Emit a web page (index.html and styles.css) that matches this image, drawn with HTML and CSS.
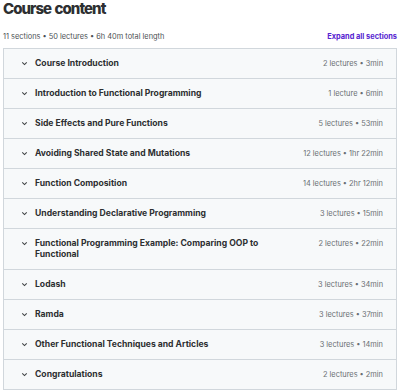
FILE: index.html
```
<!DOCTYPE html>
<html>
<head>
<meta charset="utf-8">
<link rel="stylesheet" href="styles.css">
</head>
<body>
<div class="page">
  <h2 class="title">Course content</h2>
  <div class="summary">
    <span>11 sections • 50 lectures • 6h 40m total length</span>
    <span class="expand">Expand all sections</span>
  </div>
  <div class="sections">
    <div class="row"><span class="chev"><svg viewBox="0 0 10 10"><path d="M2.5 3.8 L5 6.2 L7.5 3.8"/></svg></span><span class="name">Course Introduction</span><span class="meta">2 lectures • 3min</span></div>
    <div class="row"><span class="chev"><svg viewBox="0 0 10 10"><path d="M2.5 3.8 L5 6.2 L7.5 3.8"/></svg></span><span class="name">Introduction to Functional Programming</span><span class="meta">1 lecture • 6min</span></div>
    <div class="row"><span class="chev"><svg viewBox="0 0 10 10"><path d="M2.5 3.8 L5 6.2 L7.5 3.8"/></svg></span><span class="name">Side Effects and Pure Functions</span><span class="meta">5 lectures • 53min</span></div>
    <div class="row"><span class="chev"><svg viewBox="0 0 10 10"><path d="M2.5 3.8 L5 6.2 L7.5 3.8"/></svg></span><span class="name">Avoiding Shared State and Mutations</span><span class="meta">12 lectures • 1hr 22min</span></div>
    <div class="row"><span class="chev"><svg viewBox="0 0 10 10"><path d="M2.5 3.8 L5 6.2 L7.5 3.8"/></svg></span><span class="name">Function Composition</span><span class="meta">14 lectures • 2hr 12min</span></div>
    <div class="row"><span class="chev"><svg viewBox="0 0 10 10"><path d="M2.5 3.8 L5 6.2 L7.5 3.8"/></svg></span><span class="name">Understanding Declarative Programming</span><span class="meta">3 lectures • 15min</span></div>
    <div class="row"><span class="chev"><svg viewBox="0 0 10 10"><path d="M2.5 3.8 L5 6.2 L7.5 3.8"/></svg></span><span class="name wrap">Functional Programming Example: Comparing OOP to Functional</span><span class="meta">2 lectures • 22min</span></div>
    <div class="row"><span class="chev"><svg viewBox="0 0 10 10"><path d="M2.5 3.8 L5 6.2 L7.5 3.8"/></svg></span><span class="name">Lodash</span><span class="meta">3 lectures • 34min</span></div>
    <div class="row"><span class="chev"><svg viewBox="0 0 10 10"><path d="M2.5 3.8 L5 6.2 L7.5 3.8"/></svg></span><span class="name">Ramda</span><span class="meta">3 lectures • 37min</span></div>
    <div class="row"><span class="chev"><svg viewBox="0 0 10 10"><path d="M2.5 3.8 L5 6.2 L7.5 3.8"/></svg></span><span class="name">Other Functional Techniques and Articles</span><span class="meta">3 lectures • 14min</span></div>
    <div class="row"><span class="chev"><svg viewBox="0 0 10 10"><path d="M2.5 3.8 L5 6.2 L7.5 3.8"/></svg></span><span class="name">Congratulations</span><span class="meta">2 lectures • 2min</span></div>
  </div>
</div>
</body>
</html>
```
FILE: styles.css
```
html, body {
  margin: 0;
  padding: 0;
  background: #ffffff;
}
body {
  font-family: Inter, "Noto Sans", sans-serif;
  color: #2d2f31;
}
.page {
  padding: 1px 3px 0;
  width: 394px;
}
.title {
  margin: 0;
  font-size: 15px;
  font-weight: 800;
  line-height: 16px;
  letter-spacing: -0.95px;
  word-spacing: 1px;
  color: #2d2f31;
}
.summary {
  display: flex;
  justify-content: space-between;
  align-items: center;
  font-size: 7.4px;
  color: #4d5155;
  margin-top: 13px;
  height: 12px;
}
.expand {
  color: #5624d0;
  font-weight: 700;
}
.sections {
  margin-top: 6px;
  border: 1px solid #d1d7dc;
  border-bottom: none;
}
.row {
  display: flex;
  align-items: flex-start;
  background: #f7f9fa;
  border-bottom: 1px solid #d1d7dc;
  padding: 9px 13px 9px 16px;
}
.chev {
  width: 9px;
  height: 11px;
  margin-right: 6px;
  display: flex;
  align-items: center;
}
.chev svg {
  width: 9px;
  height: 9px;
  fill: none;
  stroke: #3e4143;
  stroke-width: 1.2;
}
.name {
  flex: 1;
  font-size: 8.6px;
  font-weight: 700;
  line-height: 11px;
}
.name.wrap {
  max-width: 252px;
}
.meta {
  font-size: 7.4px;
  line-height: 11px;
  color: #6a6f73;
  margin-left: auto;
  padding-left: 10px;
}
```
